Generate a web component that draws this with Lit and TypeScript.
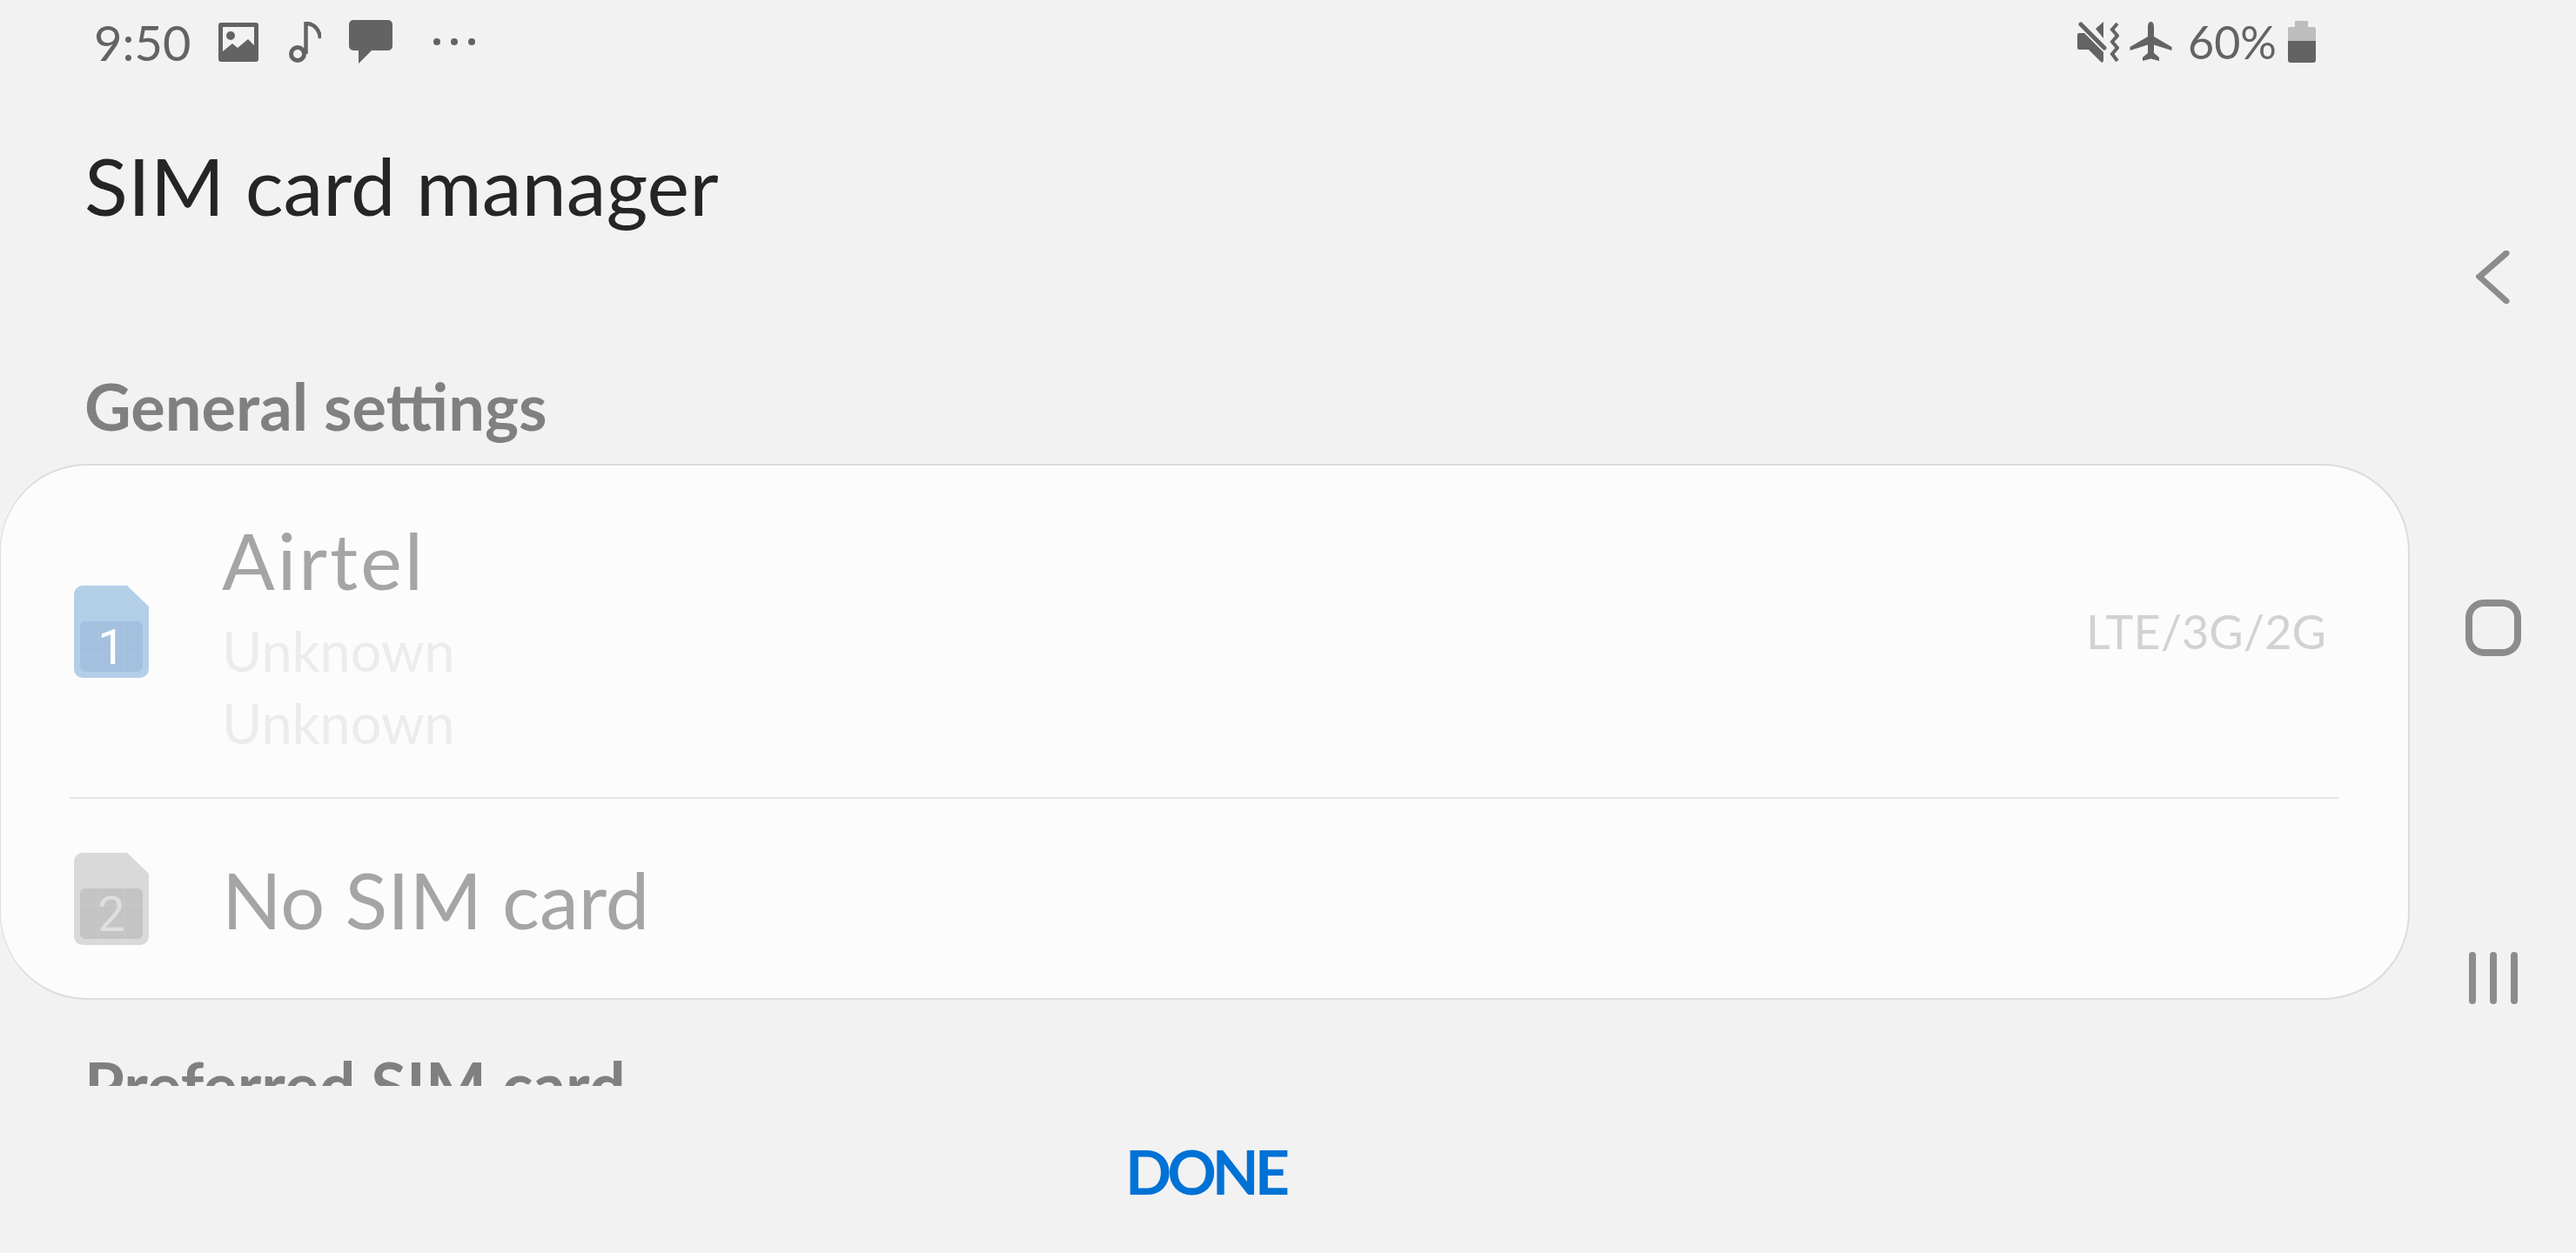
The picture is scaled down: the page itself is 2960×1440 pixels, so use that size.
import { LitElement, html, css, svg } from 'lit';
import { customElement, property } from 'lit/decorators.js';

// SIM badge: card body with cut corner, chip area and slot number
@customElement('sim-icon')
export class SimIcon extends LitElement {
  @property({ type: String }) slot_no = '1';
  @property({ type: Boolean }) active = false;

  static styles = css`
    :host { display: block; width: 86px; height: 106px; flex: none; }
    svg { display: block; }
    .num { font-family: Roboto, sans-serif; font-size: 56px; text-anchor: middle; }
  `;

  render() {
    const body = this.active ? '#b3cfe8' : '#d9d9d9';
    const chip = this.active ? '#a3c0de' : '#c4c4c4';
    const line = this.active ? '#a9c5e1' : '#c9c9c9';
    const num = this.active ? '#ffffff' : '#dedede';
    return html`<svg width="86" height="106" viewBox="0 0 86 106">
      <path d="M10 0H61L86 24V96a10 10 0 0 1-10 10H10A10 10 0 0 1 0 96V10A10 10 0 0 1 10 0Z" fill=${body}></path>
      <rect x="7" y="41" width="72" height="58" rx="6" fill=${chip}></rect>
      <path d="M28 41V99M58 41V99M7 60H79M7 80H79" stroke=${line} stroke-width="1" fill="none"></path>
      <text class="num" x="43" y="90" fill=${num}>${this.slot_no}</text>
    </svg>`;
  }
}

const imageIcon = svg`<path fill-rule="evenodd" d="M3 0H43a3 3 0 0 1 3 3V42a3 3 0 0 1-3 3H3a3 3 0 0 1-3-3V3a3 3 0 0 1 3-3ZM5 5V33L16 24L22 29L34 19L41 26V5Z"></path><circle cx="14" cy="15" r="5"></circle>`;
const musicIcon = svg`<circle cx="10" cy="37" r="7.5" fill="none" stroke="#636363" stroke-width="5"></circle><path d="M19.5 37V2C28 2 35 8 36 19" fill="none" stroke="#636363" stroke-width="4.5"></path>`;
const messageIcon = svg`<path d="M5 0H45a5 5 0 0 1 5 5V30a5 5 0 0 1-5 5H26L11 50V35H5a5 5 0 0 1-5-5V5a5 5 0 0 1 5-5Z"></path>`;
const muteIcon = svg`<path d="M0 15Q0 13 2 13H8L30 35V44Q30 48 27 46L13 32H2Q0 32 0 30Z"></path><path d="M21 8L30 0V19Z"></path><path d="M4 3L31 30" stroke="#636363" stroke-width="5" stroke-linecap="round"></path><polyline points="46,2 40,9 46,16 40,23 46,30 40,37 46,45" fill="none" stroke="#636363" stroke-width="4"></polyline>`;
const planeIcon = svg`<path d="M24.5 0C22 0 21 3 21 6V17L0.5 29V33L21 26.5V36L15 41V45L24.5 42.5L34 45V41L28 36V26.5L48.5 33V29L28 17V6C28 3 27 0 24.5 0Z"></path>`;

@customElement('app-root')
export class AppRoot extends LitElement {
  static styles = css`
    :host {
      display: flex;
      width: 2960px;
      height: 1440px;
      overflow: hidden;
      background: #f2f2f2;
      font-family: Lato, 'Noto Sans', sans-serif;
    }

    .main { width: 2770px; display: flex; flex-direction: column; }

    /* Status bar */
    .status {
      height: 96px;
      flex: none;
      display: flex;
      align-items: center;
      padding: 0 109px 0 108px;
      color: #636363;
      fill: #636363;
      font-size: 56px;
    }
    .status svg { display: block; }
    .time { width: 143px; }
    .spacer { flex: 1; }
    .icons { display: flex; align-items: center; }
    .music { margin-left: 35px; }
    .message { margin-left: 32px; }
    .plane { margin-left: 12px; }
    .dots { display: flex; gap: 12px; margin-left: 47px; }
    .dots span { width: 8px; height: 8px; border-radius: 50%; background: #636363; }
    .pct { margin: 0 13px 0 18px; font-size: 52px; }

    .title {
      margin: 57px 0 0;
      padding: 0 0 0 97px;
      height: 120px;
      flex: none;
      line-height: 120px;
      font-size: 92px;
      font-weight: 400;
      color: #252525;
    }

    /* Clipped list: the next section is cut off by the button bar */
    .scroll { height: 975px; flex: none; overflow: hidden; padding-top: 144px; box-sizing: border-box; }
    .section {
      margin: 0 0 16px;
      padding-left: 97px;
      font-size: 74px;
      font-weight: 700;
      color: #808080;
      line-height: 100px;
    }

    .card {
      box-sizing: border-box;
      width: 2769px;
      background: #fcfcfc;
      border: 2px solid #dcdcdc;
      border-left-width: 1px;
      border-radius: 100px;
      margin-bottom: 48px;
    }
    .row { display: flex; align-items: center; padding: 0 94px 0 84px; }
    .row.one { height: 381px; }
    .row.two { height: 229px; }
    .divider { height: 2px; background: #e6e6e6; margin: 0 79px; }
    .texts { margin-left: 84px; flex: 1; }
    .name { font-size: 90px; line-height: 104px; color: #a5a5a5; }
    .name.carrier { line-height: 126px; letter-spacing: 3px; }
    .sub { font-size: 63px; line-height: 83px; color: #ececec; }
    .net { font-size: 54px; color: #d2d2d2; }

    .footer { flex: 1; display: flex; align-items: center; justify-content: center; padding-top: 4px; }
    .done { font-size: 70px; font-weight: 700; letter-spacing: -5px; color: #0072d6; }

    /* Navigation rail */
    .nav {
      box-sizing: border-box;
      width: 190px;
      height: 1440px;
      padding: 288px 0 286px;
      display: flex;
      flex-direction: column;
      justify-content: space-between;
      align-items: center;
    }
    .nav svg { display: block; }
  `;

  render() {
    return html`
      <div class="main">
        <div class="status">
          <span class="time">9:50</span>
          <div class="icons">
            <svg width="46" height="45" viewBox="0 0 46 45">${imageIcon}</svg>
            <svg class="music" width="37" height="47" viewBox="0 0 37 47">${musicIcon}</svg>
            <svg class="message" width="50" height="50" viewBox="0 0 50 50">${messageIcon}</svg>
            <div class="dots"><span></span><span></span><span></span></div>
          </div>
          <div class="spacer"></div>
          <div class="icons">
            <svg width="48" height="47" viewBox="0 0 48 47">${muteIcon}</svg>
            <svg class="plane" width="49" height="46" viewBox="0 0 49 46">${planeIcon}</svg>
            <span class="pct">60%</span>
            <svg width="32" height="48" viewBox="0 0 32 48">
              <path d="M8 0H23V7H30a2 2 0 0 1 2 2V23H0V9a2 2 0 0 1 2-2H8Z" fill="#bdbdbd"></path>
              <path d="M0 23H32V45a3 3 0 0 1-3 3H3a3 3 0 0 1-3-3Z" fill="#636363"></path>
            </svg>
          </div>
        </div>
        <h1 class="title">SIM card manager</h1>
        <div class="scroll">
          <h2 class="section">General settings</h2>
          <div class="card">
            <div class="row one">
              <sim-icon slot_no="1" active></sim-icon>
              <div class="texts">
                <div class="name carrier">Airtel</div>
                <div class="sub">Unknown</div>
                <div class="sub">Unknown</div>
              </div>
              <div class="net">LTE/3G/2G</div>
            </div>
            <div class="divider"></div>
            <div class="row two">
              <sim-icon slot_no="2"></sim-icon>
              <div class="texts"><div class="name">No SIM card</div></div>
            </div>
          </div>
          <h2 class="section">Preferred SIM card</h2>
        </div>
        <div class="footer"><span class="done">DONE</span></div>
      </div>
      <div class="nav">
        <svg width="40" height="61" viewBox="0 0 40 61">
          <polyline points="35,3 4,30 35,58" fill="none" stroke="#8c8c8c" stroke-width="7" stroke-linecap="round"></polyline>
        </svg>
        <svg width="64" height="65" viewBox="0 0 64 65">
          <rect x="4" y="4" width="56" height="57" rx="17" fill="none" stroke="#8c8c8c" stroke-width="8"></rect>
        </svg>
        <svg width="56" height="60" viewBox="0 0 56 60">
          <path d="M4 4V56M28 4V56M52 4V56" stroke="#8c8c8c" stroke-width="8" stroke-linecap="round"></path>
        </svg>
      </div>
    `;
  }
}
